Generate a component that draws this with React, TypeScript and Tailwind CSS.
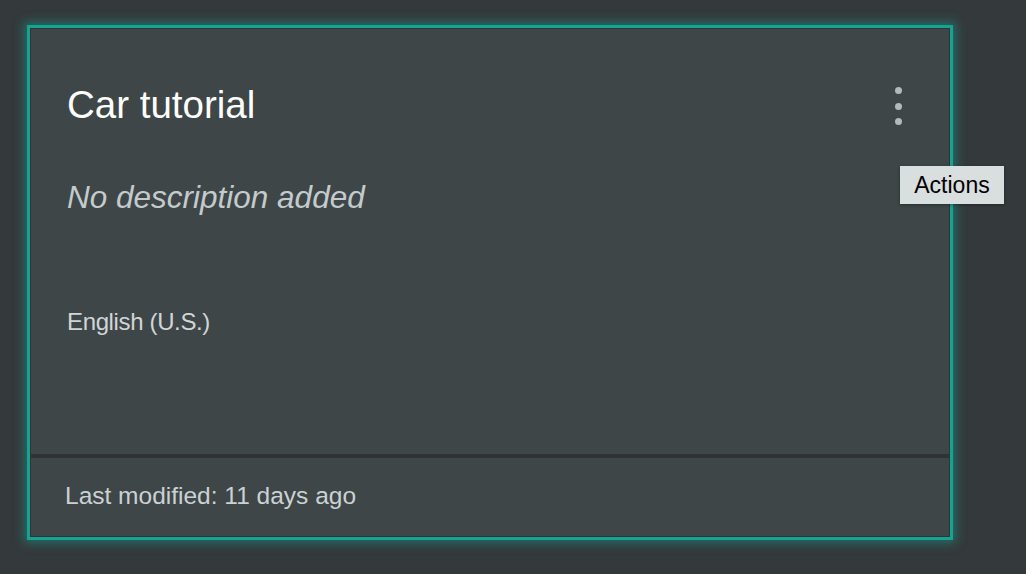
import React from "react";

export default function App() {
  return (
    <div
      className="relative w-full min-h-screen h-[574px] overflow-hidden bg-[#343a3c]"
      style={{ fontFamily: '"Liberation Sans", Arial, sans-serif' }}
    >
      {/* Project card */}
      <div className="absolute left-[27px] top-[25px] w-[926px] h-[515px] border-[3px] border-[#15a392] shadow-[0_0_9px_3px_rgba(20,160,145,0.5)]">
        <div className="flex flex-col h-full border border-[#2f3536] bg-[#3e4648]">
          <div className="h-[425px] pl-[36px] pr-[47px] pt-[57px]">
            <div className="flex items-start justify-between">
              <h2 className="text-[38.5px] leading-[38px] text-white">
                Car tutorial
              </h2>
              <button
                type="button"
                aria-label="Actions"
                className="mt-[1px] flex flex-col items-center gap-[8.5px] px-0"
              >
                <span className="block w-[7px] h-[7px] rounded-full bg-[#b3babc]" />
                <span className="block w-[7px] h-[7px] rounded-full bg-[#b3babc]" />
                <span className="block w-[7px] h-[7px] rounded-full bg-[#b3babc]" />
              </button>
            </div>
            <p className="mt-[57px] text-[31.5px] leading-[31px] italic text-[#c3cbcd]">
              No description added
            </p>
            <p className="mt-[97px] text-[24px] leading-[24px] text-[#d0d6d7] tracking-[-0.015em]">
              English (U.S.)
            </p>
          </div>
          <div className="h-[4px] bg-[#2f3334]" />
          <div className="flex-1 pl-[34px] pt-[26px]">
            <p className="text-[24.5px] leading-[24px] text-[#cbd2d3]">
              Last modified: 11 days ago
            </p>
          </div>
        </div>
      </div>

      {/* Tooltip */}
      <div className="absolute left-[900px] top-[166px] w-[104px] h-[38px] flex items-center justify-center bg-[#d9dedf] shadow-[0_1px_3px_rgba(0,0,0,0.35)]">
        <span className="text-[23px] leading-none text-black">Actions</span>
      </div>
    </div>
  );
}
